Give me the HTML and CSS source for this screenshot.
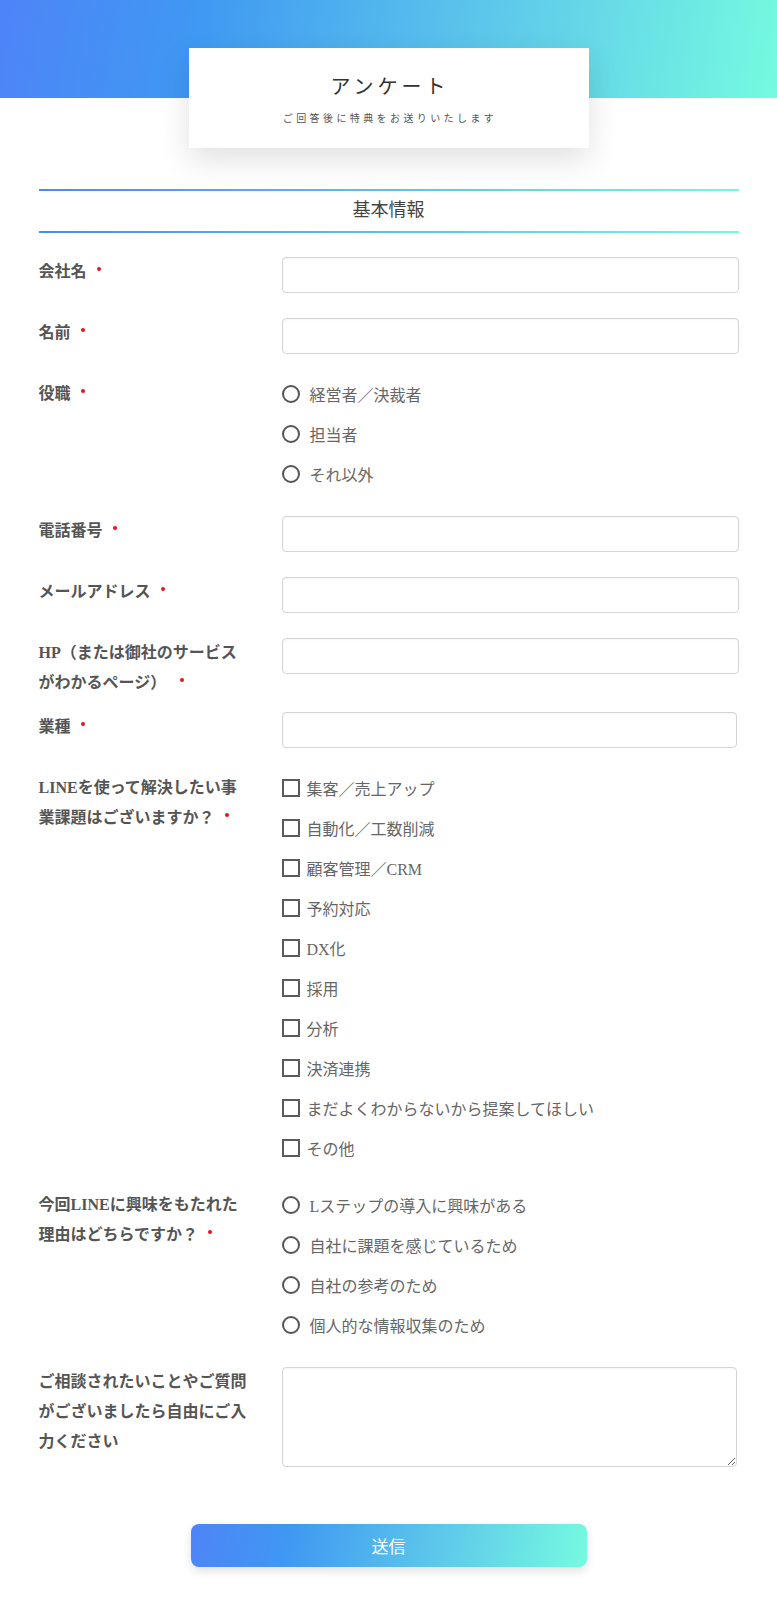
FILE: index.html
```html
<!DOCTYPE html>
<html lang="ja">
<head>
  <meta charset="UTF-8" />
  <meta name="viewport" content="width=device-width, initial-scale=1.0"/>
  <title>アンケート</title>
  <link rel="stylesheet" href="styles.css">
</head>
<body>

  <div class="hero"></div>

  <div class="card">
    <h1>アンケート</h1>
    <p>ご回答後に特典をお送りいたします</p>
  </div>

  <form class="form" onsubmit="return false;">
    <h2 class="section-title">基本情報</h2>

    <div class="row">
      <div class="label">会社名<span class="req"></span></div>
      <div class="field"><input type="text" class="text-input"></div>
    </div>

    <div class="row">
      <div class="label">名前<span class="req"></span></div>
      <div class="field"><input type="text" class="text-input"></div>
    </div>

    <div class="row">
      <div class="label">役職<span class="req"></span></div>
      <div class="field options">
        <label class="option"><input type="radio" name="role" class="radio">経営者／決裁者</label>
        <label class="option"><input type="radio" name="role" class="radio">担当者</label>
        <label class="option"><input type="radio" name="role" class="radio">それ以外</label>
      </div>
    </div>

    <div class="row">
      <div class="label">電話番号<span class="req"></span></div>
      <div class="field"><input type="tel" class="text-input"></div>
    </div>

    <div class="row">
      <div class="label">メールアドレス<span class="req"></span></div>
      <div class="field"><input type="email" class="text-input"></div>
    </div>

    <div class="row">
      <div class="label">HP（または御社のサービス<br>がわかるページ）<span class="req wide"></span></div>
      <div class="field"><input type="text" class="text-input"></div>
    </div>

    <div class="row">
      <div class="label">業種<span class="req"></span></div>
      <div class="field"><input type="text" class="text-input narrow"></div>
    </div>

    <div class="row">
      <div class="label">LINEを使って解決したい事<br>業課題はございますか？<span class="req"></span></div>
      <div class="field options">
        <label class="option"><input type="checkbox" class="check">集客／売上アップ</label>
        <label class="option"><input type="checkbox" class="check">自動化／工数削減</label>
        <label class="option"><input type="checkbox" class="check">顧客管理／CRM</label>
        <label class="option"><input type="checkbox" class="check">予約対応</label>
        <label class="option"><input type="checkbox" class="check">DX化</label>
        <label class="option"><input type="checkbox" class="check">採用</label>
        <label class="option"><input type="checkbox" class="check">分析</label>
        <label class="option"><input type="checkbox" class="check">決済連携</label>
        <label class="option"><input type="checkbox" class="check">まだよくわからないから提案してほしい</label>
        <label class="option"><input type="checkbox" class="check">その他</label>
      </div>
    </div>

    <div class="row">
      <div class="label">今回LINEに興味をもたれた<br>理由はどちらですか？<span class="req"></span></div>
      <div class="field options">
        <label class="option"><input type="radio" name="reason" class="radio">Lステップの導入に興味がある</label>
        <label class="option"><input type="radio" name="reason" class="radio">自社に課題を感じているため</label>
        <label class="option"><input type="radio" name="reason" class="radio">自社の参考のため</label>
        <label class="option"><input type="radio" name="reason" class="radio">個人的な情報収集のため</label>
      </div>
    </div>

    <div class="row">
      <div class="label">ご相談されたいことやご質問<br>がございましたら自由にご入<br>力ください</div>
      <div class="field"><textarea class="text-area"></textarea></div>
    </div>

    <button type="submit" class="submit">送信</button>
  </form>

</body>
</html>
```

FILE: styles.css
```css
body {
  margin: 0;
  padding: 0;
  font-family: "Liberation Serif", "Noto Sans CJK JP", serif;
  color: #555;
  background-color: #fff;
}
.hero {
  height: 98px;
  background: linear-gradient(100deg, #4e84f8 0%, #3f98f2 25%, #5fcbea 65%, #75fae0 100%);
}
.card {
  width: 400px;
  height: 100px;
  margin: -50px auto 0;
  padding-top: 24px;
  box-sizing: border-box;
  background-color: #fff;
  box-shadow: 0 12px 30px rgba(0, 0, 0, 0.12);
  text-align: center;
}
.card h1 {
  margin: 0;
  padding-left: 3px;
  font-size: 20px;
  font-weight: 400;
  line-height: 30px;
  letter-spacing: 4px;
  color: #333;
}
.card p {
  margin: 9px 0 0;
  padding-left: 3px;
  font-size: 10px;
  line-height: 16px;
  letter-spacing: 3.4px;
  color: #555;
}
.form {
  width: 700px;
  margin: 41px auto 0;
  padding-bottom: 33px;
}
.section-title {
  margin: 0 0 24px;
  height: 44px;
  line-height: 42px;
  text-align: center;
  font-size: 18px;
  font-weight: 400;
  color: #444;
  background:
    linear-gradient(to right, #4a88f5, #74f8e0) top / 100% 2px no-repeat,
    linear-gradient(to right, #4a88f5, #74f8e0) bottom / 100% 2px no-repeat;
}
.row {
  display: grid;
  grid-template-columns: 243px 1fr;
  margin-bottom: 14px;
}
.label {
  font-size: 16px;
  font-weight: 700;
  line-height: 30px;
  color: #555;
}
.req {
  display: inline-block;
  width: 4px;
  height: 4px;
  margin-left: 10px;
  border-radius: 50%;
  background-color: #e8141b;
  vertical-align: 6px;
}
.req.wide {
  margin-left: 14px;
}
.text-input {
  display: block;
  width: 100%;
  height: 36px;
  margin: 0 0 11px;
  box-sizing: border-box;
  border: 1px solid #d4d4d4;
  border-radius: 4px;
  box-shadow: inset 0 1px 2px rgba(0, 0, 0, 0.04);
  font-size: 15px;
}
.text-input.narrow {
  width: calc(100% - 2px);
}
.text-area {
  display: block;
  width: calc(100% - 2px);
  height: 100px;
  margin: 0 0 11px;
  box-sizing: border-box;
  border: 1px solid #d4d4d4;
  border-radius: 4px;
  box-shadow: inset 0 1px 2px rgba(0, 0, 0, 0.04);
  font-size: 15px;
}
.options {
  padding-bottom: 3px;
}
.option {
  display: flex;
  align-items: center;
  height: 30px;
  margin-bottom: 10px;
  font-size: 16px;
  color: #666;
}
.radio,
.check {
  appearance: none;
  -webkit-appearance: none;
  flex: none;
  width: 18px;
  height: 18px;
  margin: 0 10px 0 0;
  box-sizing: border-box;
  border: 2px solid #555;
  background-color: #fff;
}
.radio {
  border-radius: 50%;
}
.check {
  margin-right: 7px;
  border-color: #5a5a5a;
}
.submit {
  display: block;
  width: 396px;
  height: 43px;
  margin: 46px auto 0;
  border: none;
  border-radius: 8px;
  background: linear-gradient(100deg, #4e84f8 0%, #3f98f2 25%, #5fcbea 65%, #75fae0 100%);
  box-shadow: 0 4px 10px rgba(0, 0, 0, 0.12);
  color: #fff;
  font-family: "Liberation Serif", "Noto Sans CJK JP", serif;
  font-size: 17px;
  cursor: pointer;
}
```
